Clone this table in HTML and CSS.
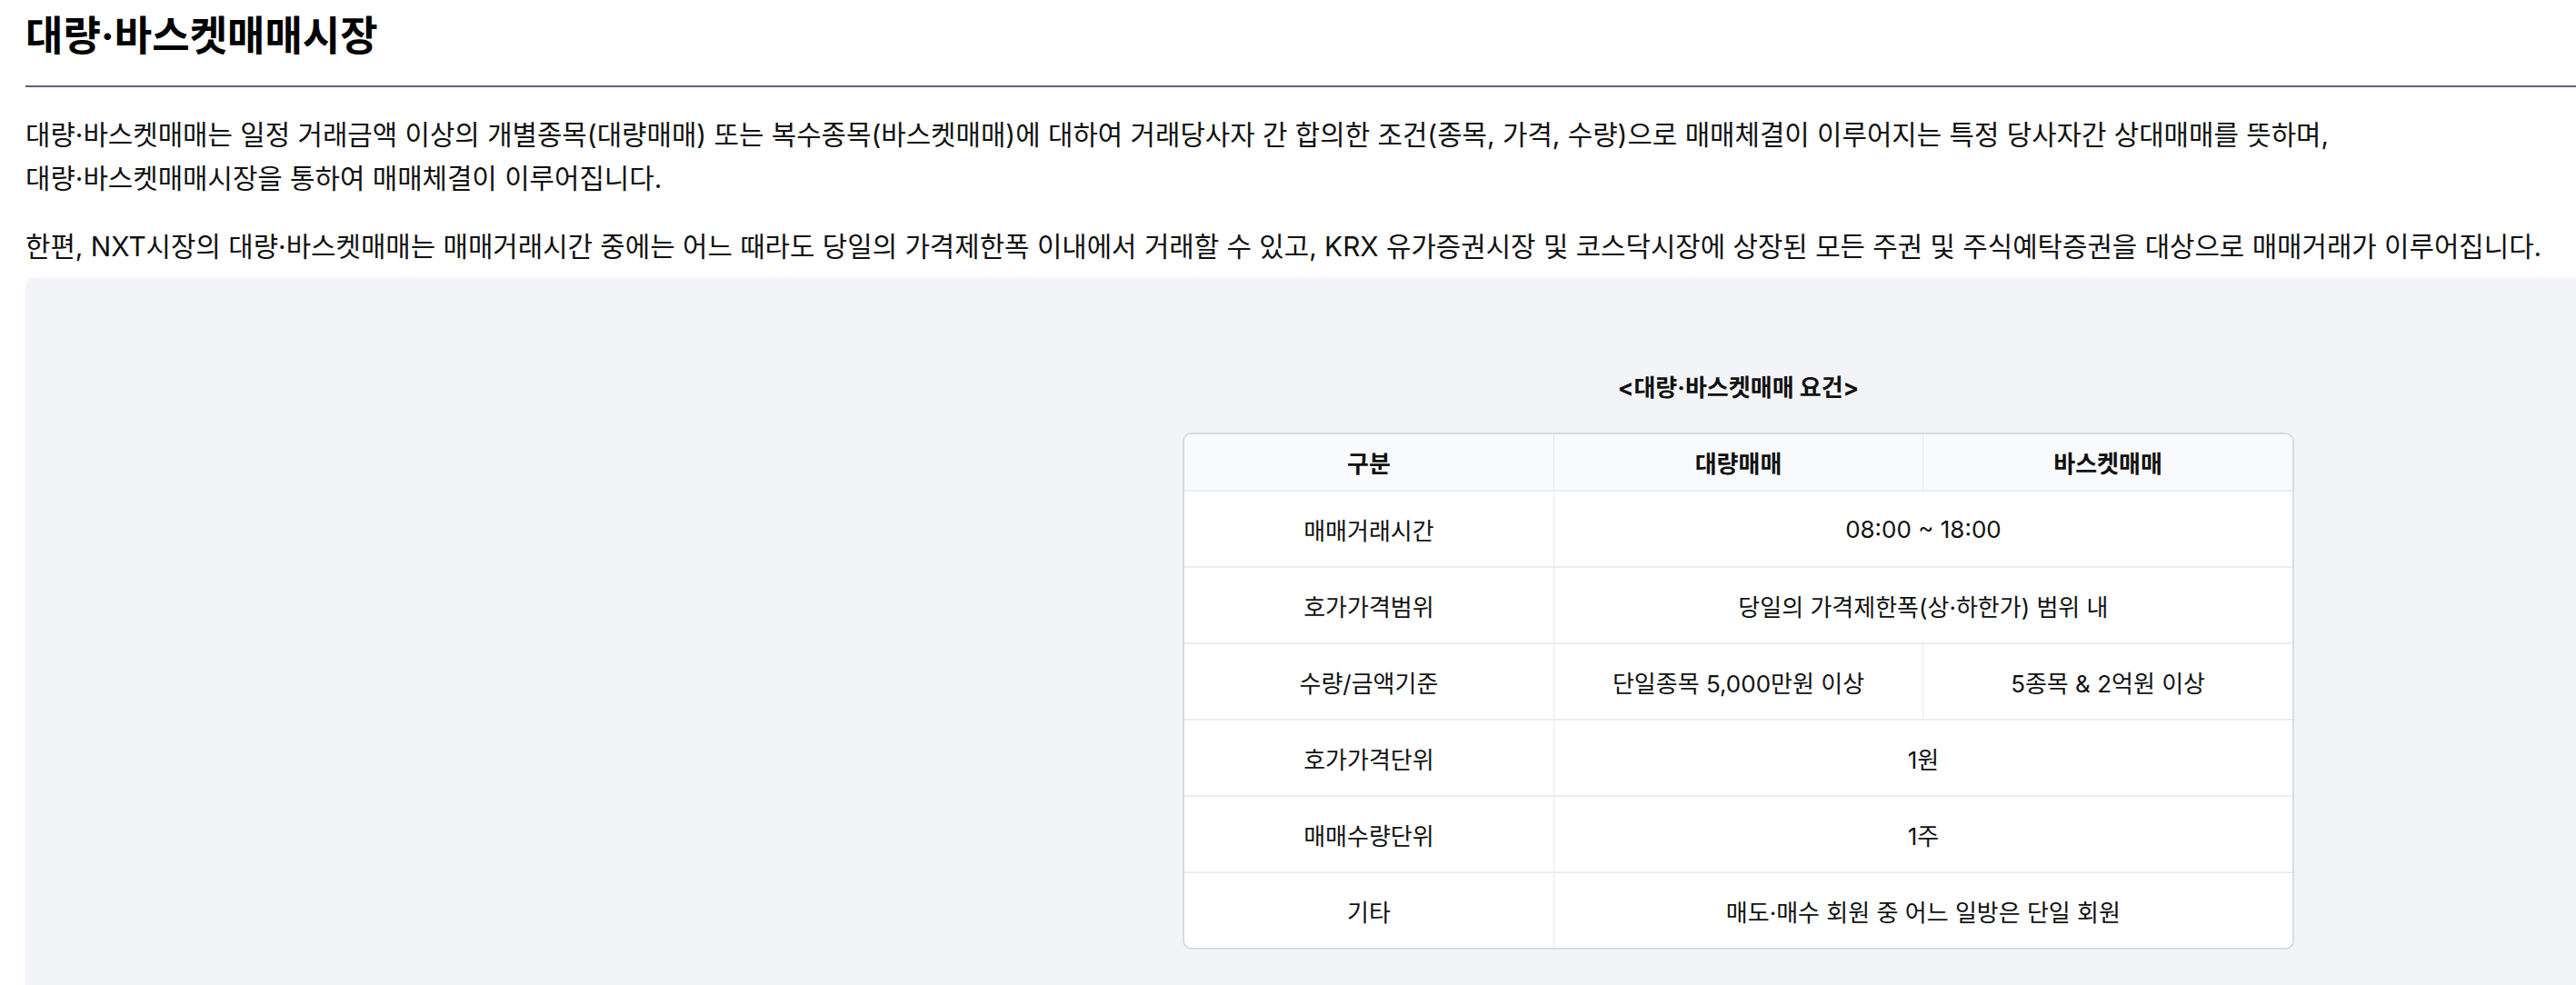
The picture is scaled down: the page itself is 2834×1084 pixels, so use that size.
FILE: index.html
```html
<!DOCTYPE html>
<html lang="ko">
<head>
<meta charset="utf-8">
<title>대량·바스켓매매시장</title>
<link rel="stylesheet" href="styles.css">
</head>
<body>
<div class="page">
  <h1 class="title">대량·바스켓매매시장</h1>
  <p class="desc">대량·바스켓매매는 일정 거래금액 이상의 개별종목(대량매매) 또는 복수종목(바스켓매매)에 대하여 거래당사자 간 합의한 조건(종목, 가격, 수량)으로 매매체결이 이루어지는 특정 당사자간 상대매매를 뜻하며,<br>대량·바스켓매매시장을 통하여 매매체결이 이루어집니다.</p>
  <p class="desc">한편, NXT시장의 대량·바스켓매매는 매매거래시간 중에는 어느 때라도 당일의 가격제한폭 이내에서 거래할 수 있고, KRX 유가증권시장 및 코스닥시장에 상장된 모든 주권 및 주식예탁증권을 대상으로 매매거래가 이루어집니다.</p>
  <div class="panel">
    <div class="caption">&lt;대량·바스켓매매 요건&gt;</div>
    <div class="table-wrap">
      <table class="req">
        <thead>
          <tr><th>구분</th><th>대량매매</th><th>바스켓매매</th></tr>
        </thead>
        <tbody>
          <tr><td>매매거래시간</td><td colspan="2">08:00 ~ 18:00</td></tr>
          <tr><td>호가가격범위</td><td colspan="2">당일의 가격제한폭(상·하한가) 범위 내</td></tr>
          <tr><td>수량/금액기준</td><td>단일종목 5,000만원 이상</td><td>5종목 &amp; 2억원 이상</td></tr>
          <tr><td>호가가격단위</td><td colspan="2">1원</td></tr>
          <tr><td>매매수량단위</td><td colspan="2">1주</td></tr>
          <tr><td>기타</td><td colspan="2">매도·매수 회원 중 어느 일방은 단일 회원</td></tr>
        </tbody>
      </table>
    </div>
  </div>
</div>
</body>
</html>
```
FILE: styles.css
```css
html, body {
  margin: 0;
  padding: 0;
  overflow: hidden;
  background: #ffffff;
}
body {
  font-family: Inter, "Noto Sans CJK KR", sans-serif;
  color: #111111;
}
.page {
  width: 3769px;
  padding: 0 0 0 28px;
}
.title {
  margin: 0;
  padding-top: 8px;
  font-size: 45px;
  font-weight: 700;
  line-height: 64px;
  color: #000000;
  border-bottom: 2px solid #5b6478;
  padding-bottom: 22px;
}
.desc {
  margin: 28px 0 0;
  font-size: 29.8px;
  line-height: 48px;
}
.desc + .desc {
  margin-top: 27px;
}
.panel {
  margin-top: 10px;
  background: #f3f4f8;
  border-radius: 10px;
  padding: 102px 0 60px;
  display: flex;
  flex-direction: column;
  align-items: center;
}
.caption {
  font-size: 26px;
  font-weight: 700;
  line-height: 40px;
}
.table-wrap {
  margin-top: 29px;
  width: 1219px;
  border: 2px solid #d6dce4;
  border-radius: 10px;
  overflow: hidden;
  background: #ffffff;
}
.req {
  width: 100%;
  border-collapse: collapse;
  table-layout: fixed;
  font-size: 26px;
}
.req th, .req td {
  text-align: center;
  vertical-align: middle;
  border-right: 1px solid #e6eaef;
  border-bottom: 2px solid #e9edf2;
}
.req th:last-child, .req td:last-child {
  border-right: none;
}
.req tbody tr:last-child td {
  border-bottom: none;
}
.req th {
  height: 59px;
  background: #f9fafd;
  font-weight: 700;
}
.req td {
  height: 80px;
  font-weight: 400;
}
```
